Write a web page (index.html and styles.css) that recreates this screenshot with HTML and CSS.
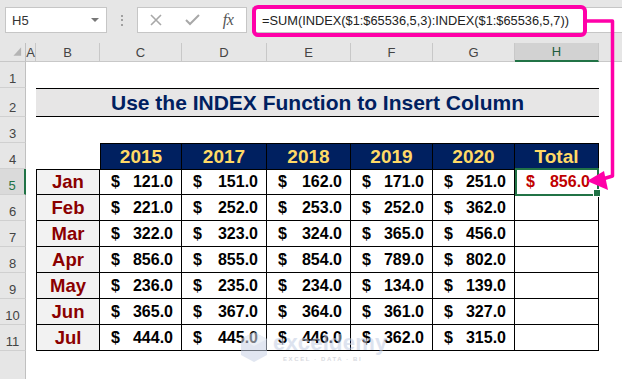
FILE: index.html
```html
<!DOCTYPE html>
<html>
<head>
<meta charset="utf-8">
<link rel="stylesheet" href="styles.css">
</head>
<body>
<div class="app">
  <div class="toolbar">
    <div class="namebox"><span>H5</span><span class="dd"></span></div>
    <div class="grip"><i></i><i></i><i></i></div>
    <div class="btns">
      <span class="btn"><svg width="12" height="12" viewBox="0 0 12 12"><path d="M1 1L11 11M11 1L1 11" stroke="#a8a8a8" stroke-width="1.6" fill="none"/></svg></span>
      <span class="btn"><svg width="15" height="12" viewBox="0 0 15 12"><path d="M1 6L5 10L14 1" stroke="#a8a8a8" stroke-width="2" fill="none"/></svg></span>
      <span class="btn fx">fx</span>
    </div>
    <div class="fbar"><span>=SUM(INDEX($1:$65536,5,3):INDEX($1:$65536,5,7))</span><div class="hl"></div></div>
  </div>

  <div class="sheet">
    <div class="ch corner"><svg width="26" height="19" viewBox="0 0 26 19"><polygon points="14,13 22,4 22,13" fill="#b4b4b4"/></svg></div>
    <div class="ch">A</div><div class="ch">B</div><div class="ch">C</div><div class="ch">D</div><div class="ch">E</div><div class="ch">F</div><div class="ch">G</div><div class="ch sel">H</div><div class="ch fill"></div>

    <div class="rh">1</div><div class="span"></div>

    <div class="rh">2</div><div></div><div class="title">Use the INDEX Function to Insert Column</div><div></div>

    <div class="rh">3</div><div class="span"></div>

    <div class="rh">4</div><div></div><div></div>
    <div class="hd first">2015</div><div class="hd">2017</div><div class="hd">2018</div><div class="hd">2019</div><div class="hd">2020</div><div class="hd">Total</div><div></div>

    <div class="rh sel">5</div><div></div><div class="mo top">Jan</div>
    <div class="d"><span>$</span><span>121.0</span></div><div class="d"><span>$</span><span>151.0</span></div><div class="d"><span>$</span><span>162.0</span></div><div class="d"><span>$</span><span>171.0</span></div><div class="d"><span>$</span><span>251.0</span></div>
    <div class="d tot"><span>$</span><span>856.0</span></div><div></div>

    <div class="rh">6</div><div></div><div class="mo">Feb</div>
    <div class="d"><span>$</span><span>221.0</span></div><div class="d"><span>$</span><span>252.0</span></div><div class="d"><span>$</span><span>253.0</span></div><div class="d"><span>$</span><span>252.0</span></div><div class="d"><span>$</span><span>362.0</span></div>
    <div class="d"></div><div></div>

    <div class="rh">7</div><div></div><div class="mo">Mar</div>
    <div class="d"><span>$</span><span>322.0</span></div><div class="d"><span>$</span><span>323.0</span></div><div class="d"><span>$</span><span>324.0</span></div><div class="d"><span>$</span><span>365.0</span></div><div class="d"><span>$</span><span>456.0</span></div>
    <div class="d"></div><div></div>

    <div class="rh">8</div><div></div><div class="mo">Apr</div>
    <div class="d"><span>$</span><span>856.0</span></div><div class="d"><span>$</span><span>855.0</span></div><div class="d"><span>$</span><span>854.0</span></div><div class="d"><span>$</span><span>789.0</span></div><div class="d"><span>$</span><span>802.0</span></div>
    <div class="d"></div><div></div>

    <div class="rh">9</div><div></div><div class="mo">May</div>
    <div class="d"><span>$</span><span>236.0</span></div><div class="d"><span>$</span><span>235.0</span></div><div class="d"><span>$</span><span>234.0</span></div><div class="d"><span>$</span><span>134.0</span></div><div class="d"><span>$</span><span>139.0</span></div>
    <div class="d"></div><div></div>

    <div class="rh">10</div><div></div><div class="mo">Jun</div>
    <div class="d"><span>$</span><span>365.0</span></div><div class="d"><span>$</span><span>367.0</span></div><div class="d"><span>$</span><span>364.0</span></div><div class="d"><span>$</span><span>361.0</span></div><div class="d"><span>$</span><span>327.0</span></div>
    <div class="d"></div><div></div>

    <div class="rh">11</div><div></div><div class="mo">Jul</div>
    <div class="d"><span>$</span><span>444.0</span></div><div class="d"><span>$</span><span>445.0</span></div><div class="d"><span>$</span><span>446.0</span></div><div class="d"><span>$</span><span>362.0</span></div><div class="d"><span>$</span><span>315.0</span></div>
    <div class="d"></div><div></div>

    <div class="rh end"></div><div class="span"></div>
  </div>

  <div class="wm">
    <svg class="wm-icon" width="28" height="32" viewBox="0 0 28 32"><path d="M14 1L27 8V24L14 31L1 24V8Z" fill="#c9d3e6"/><path d="M14 1L27 8L14 15L1 8Z" fill="#dde4f0"/></svg>
    <div class="wm-text"><span class="wm-name">exceldemy</span><span class="wm-sub">EXCEL · DATA · BI</span></div>
  </div>

  <svg class="arrow" width="622" height="379" viewBox="0 0 622 379">
    <polyline points="587,21 612.5,21 612.5,176 601,179.5" fill="none" stroke="#ff00a8" stroke-width="3.5" stroke-linejoin="round"/>
    <polygon points="587,181 604,171 608,190" fill="#ff00a8"/>
  </svg>
</div>
</body>
</html>
```

FILE: styles.css
```css
* { box-sizing: border-box; margin: 0; padding: 0; }
body { width: 622px; height: 379px; overflow: hidden; background: #fff; font-family: "Liberation Sans", Arial, sans-serif; }
.app { position: relative; width: 622px; height: 379px; }

.toolbar { height: 43px; background: #e6e6e6; display: flex; align-items: flex-start; padding: 7px 0 0 5px; }
.namebox { width: 102px; height: 26px; background: #fff; border: 1px solid #c6c6c6; display: flex; align-items: center; justify-content: space-between; padding: 0 6px 0 6px; font-size: 13px; color: #333; }
.dd { width: 0; height: 0; border-left: 4px solid transparent; border-right: 4px solid transparent; border-top: 4px solid #777; margin-right: 1px; }
.grip { width: 30px; height: 26px; display: flex; flex-direction: column; align-items: center; justify-content: center; gap: 2.5px; }
.grip i { display: block; width: 2px; height: 2px; background: #a0a0a0; }
.btns { width: 110px; height: 26px; background: #fff; border: 1px solid #c6c6c6; display: flex; }
.btn { width: 36px; display: flex; align-items: center; justify-content: center; }
.fx { font-family: "Liberation Serif", serif; font-style: italic; font-size: 16px; color: #555; letter-spacing: -0.5px; }
.fbar { flex: 1; margin-left: 5px; height: 26px; background: #fff; border: 1px solid #c6c6c6; border-right: none; position: relative; display: flex; align-items: center; padding-left: 9px; font-size: 12.8px; color: #222; }
.hl { position: absolute; left: -1px; top: -3px; width: 335px; height: 32px; border: 4px solid #ff00a8; border-radius: 6px; }

.sheet { display: grid; grid-template-columns: 26px 10px 64px 82px 85px 84px 82px 82px 84px 1fr; grid-template-rows: 19px 26px 29px 26px 26px repeat(7, 26px) 1fr; height: 336px; }
.span { grid-column: 2 / -1; }

.ch { background: #e6e6e6; border-right: 1px solid #c8c8c8; border-bottom: 1px solid #c8c8c8; display: flex; align-items: center; justify-content: center; font-size: 13px; color: #444; }
.ch.corner { border-right: 1px solid #c0c0c0; }
.ch.sel { background: #d2d2d2; border-bottom: 2px solid #217346; color: #1e5c3c; }
.ch.fill { border-right: none; }

.rh { background: #e6e6e6; border-right: 1px solid #c0c0c0; border-bottom: 1px solid #d0d0d0; display: flex; align-items: flex-end; justify-content: center; padding-bottom: 2px; font-size: 13px; line-height: 1; color: #444; }
.rh.sel { background: #dadada; border-right: 2px solid #217346; color: #217346; }
.rh.end { border-bottom: none; }

.title { grid-column: span 7; background: #e7e6e6; border-top: 1px solid #000; border-bottom: 1px solid #000; display: flex; align-items: center; justify-content: center; font-weight: bold; font-size: 21px; color: #002060; }

.hd { background: #002060; color: #ffd966; font-weight: bold; font-size: 19px; border-top: 1px solid #000; border-right: 1px solid #000; display: flex; align-items: center; justify-content: center; }
.hd.first { border-left: 1px solid #000; }

.mo { background: #f2f2f2; color: #8b0000; font-weight: bold; font-size: 18.5px; border-left: 1px solid #000; border-right: 1px solid #000; border-bottom: 1px solid #000; display: flex; align-items: center; justify-content: center; }
.mo.top { border-top: 1px solid #000; }

.d { display: flex; justify-content: space-between; align-items: center; padding: 0 8px 0 11px; font-weight: bold; font-size: 16px; color: #000; border-right: 1px solid #000; border-bottom: 1px solid #000; }
.mo.top ~ .d { border-top: 1px solid #000; }
.mo.top ~ .d ~ .d ~ .d ~ .d ~ .d ~ .d ~ .d { border-top: none; }

.tot { color: #c00000; position: relative; }
.tot::before { content: ""; position: absolute; left: 0; top: -2px; right: -1px; bottom: -2px; border: 2px solid #217346; }
.tot::after { content: ""; position: absolute; width: 6px; height: 6px; right: -3px; bottom: -3px; background: #217346; border: 1px solid #fff; }

.wm { position: absolute; left: 240px; top: 331px; display: flex; align-items: center; gap: 5px; opacity: 0.55; }
.wm-text { display: flex; flex-direction: column; line-height: 1; }
.wm-name { font-family: "Liberation Sans", Arial, sans-serif; font-weight: bold; font-size: 22px; color: #c3cde3; letter-spacing: 0.2px; }
.wm-sub { font-size: 6px; color: #b8bcc6; letter-spacing: 1.6px; margin-top: 2px; padding-left: 10px; font-weight: bold; }

.arrow { position: absolute; left: 0; top: 0; pointer-events: none; }
```
